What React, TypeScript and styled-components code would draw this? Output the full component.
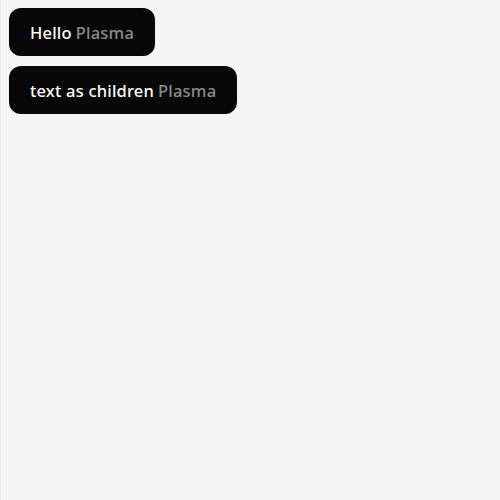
import React from 'react'
import styled, { createGlobalStyle } from 'styled-components'

const GlobalStyle = createGlobalStyle`
  html, body {
    margin: 0;
    padding: 0;
    background: #f5f5f5;
  }
`

const Page = styled.div`
  box-sizing: border-box;
  min-height: 100vh;
  border-left: 1px solid #e9e9e9;
  padding: 8px;
  display: flex;
  flex-direction: column;
  align-items: flex-start;
  gap: 10px;
  font-family: "Noto Sans", sans-serif;
`

const Button = styled.button`
  height: 48px;
  padding: 0 21px;
  border: none;
  border-radius: 12px;
  background: #080808;
  color: #ffffff;
  font-family: inherit;
  font-size: 16.5px;
  font-weight: 500;
  letter-spacing: 0.2px;
  display: flex;
  align-items: center;
  gap: 4px;
  cursor: pointer;
`

const Value = styled.span`
  color: #8c8c8c;
`

const App = () => {
  return (
    <>
      <GlobalStyle />
      <Page>
        <Button>
          Hello <Value>Plasma</Value>
        </Button>
        <Button>
          text as children <Value>Plasma</Value>
        </Button>
      </Page>
    </>
  )
}

export default App
